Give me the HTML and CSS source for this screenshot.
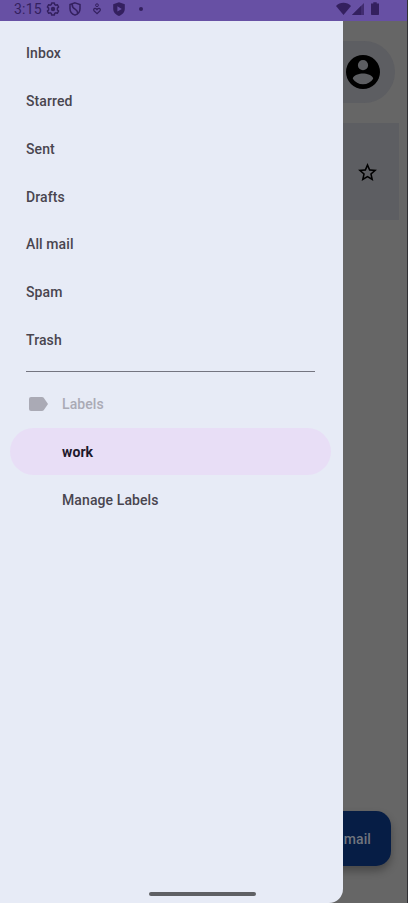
FILE: index.html
```html
<!DOCTYPE html>
<html lang="en">
<head>
<meta charset="utf-8">
<title>Mail</title>
<link rel="stylesheet" href="styles.css">
</head>
<body>
<div class="phone">
  <header class="status">
    <span class="clock">3:15</span>
    <svg class="gear" viewBox="0 0 14 14"><path d="M5.700 1h2.600l.4 1.600 1 .6 1.600-.5 1.300 2.300-1.200 1.100v1.800l1.200 1.100-1.300 2.300-1.600-.5-1 .6-.4 1.600H5.700l-.4-1.600-1-.6-1.600.5L1.400 9l1.200-1.100V6.100L1.400 5l1.300-2.300 1.600.5 1-.6z" fill="none" stroke="currentColor" stroke-width="1.500" stroke-linejoin="round"/><circle cx="7" cy="7" r="2.200" fill="currentColor"/></svg>
    <svg class="shield" viewBox="0 0 12 14"><path d="M6 .9 11 2.500v4.200C11 9.800 8.900 12.200 6 13.100 3.100 12.200 1 9.800 1 6.700V2.500zM3.200 2.200c-.2 2.600 1 3.800 2.900 4.900 1.800 1 2.500 2.100 2.600 4" fill="none" stroke="currentColor" stroke-width="1.500"/></svg>
    <svg class="care" viewBox="0 0 8 12"><circle cx="4" cy="2.200" r="1.400" fill="none" stroke="currentColor"/><path d="M4 10.600 1.200 8C.2 7 .7 5.400 2 5.400c.9 0 1.500.5 2 1.200.5-.7 1.100-1.200 2-1.200 1.300 0 1.800 1.600.8 2.600z" fill="none" stroke="currentColor" stroke-width="1.200"/></svg>
    <svg class="play" viewBox="0 0 12 14"><path fill-rule="evenodd" d="M6 .2 11.800 2.200v4.500c0 3.400-2.400 6-5.800 7.200C2.600 12.700.2 10.100.2 6.700V2.200zM4.400 4.200v5.400L8.800 6.900z" fill="currentColor"/></svg>
    <i class="dot"></i>
    <svg class="radios" viewBox="0 0 44 14"><path d="M0 4C4-.2 11-.2 15 4L7.500 13z" fill="currentColor"/><path d="M28 1v12H16z" fill="currentColor" opacity=".75"/><path d="M25 4v9h-9z" fill="currentColor"/><path d="M37.300.2h3.400v1.300H43V12.200q0 .8-.8.8h-6.400q-.8 0-.8-.8V1.500h2.300z" fill="currentColor"/></svg>
  </header>
  <main class="app">
    <div class="search">
      <svg class="account" viewBox="2 2 20 20"><path d="M12 2a10 10 0 1 0 0 20 10 10 0 0 0 0-20zm0 3a3 3 0 1 1 0 6 3 3 0 0 1 0-6zm0 14.200a7.200 7.200 0 0 1-6-3.220c.03-1.990 4-3.080 6-3.080s5.970 1.090 6 3.080a7.200 7.200 0 0 1-6 3.220z"/></svg>
    </div>
    <div class="message">
      <svg class="star" viewBox="2 2 20 19"><path d="m22 9.240-7.190-.62L12 2 9.190 8.630 2 9.240l5.460 4.730L5.820 21 12 17.270 18.180 21l-1.630-7.030zM12 15.400l-3.760 2.270 1-4.280-3.320-2.880 4.380-.38L12 6.100l1.710 4.040 4.380.38-3.320 2.880 1 4.280z"/></svg>
    </div>
    <div class="compose">mail</div>
  </main>
  <nav class="drawer">
    <a class="item">Inbox</a>
    <a class="item">Starred</a>
    <a class="item">Sent</a>
    <a class="item">Drafts</a>
    <a class="item">All mail</a>
    <a class="item">Spam</a>
    <a class="item">Trash</a>
    <hr class="rule">
    <div class="item heading"><svg class="tag" viewBox="0 0 19 14"><path d="M2 0h11q1 0 1.700.8L19 7l-4.300 6.200q-.7.800-1.700.8H2q-2 0-2-2V2q0-2 2-2z" fill="currentColor"/></svg>Labels</div>
    <a class="item label selected">work</a>
    <a class="item label">Manage Labels</a>
  </nav>
  <div class="handle"></div>
</div>
</body>
</html>
```
FILE: styles.css
```css
* { box-sizing: border-box; }
body { margin: 0; font-family: Roboto, sans-serif; }
svg { display: block; flex: none; }
.phone {
  position: relative;
  width: 408px;
  height: 903px;
  overflow: hidden;
  display: flex;
  flex-direction: column;
  background: #666;
}
.phone::after {
  content: "";
  position: absolute;
  top: 0;
  right: 0;
  width: 1px;
  height: 100%;
  background: #303034;
}
.status {
  height: 21px;
  flex: none;
  display: flex;
  align-items: center;
  padding: 0 28px 3px 14px;
  background: #6750a4;
  color: #34205f;
}
.clock { width: 31.500px; font-size: 14px; line-height: 18px; letter-spacing: 0.2px; }
.gear { width: 14px; height: 14px; }
.shield { width: 12px; height: 14px; margin-left: 9.500px; }
.care { width: 8px; height: 12px; margin-left: 11.500px; }
.play { width: 12px; height: 14px; margin-left: 12px; }
.dot { width: 4px; height: 4px; border-radius: 50%; margin-left: 14px; background: currentColor; }
.radios { width: 44px; height: 14px; margin-left: auto; }
.app {
  flex: 1;
  display: flex;
  flex-direction: column;
  padding: 20px 9px 37px;
}
.search {
  height: 62px;
  margin: 0 4px 20px 0;
  padding: 0 15px 1px 0;
  border-radius: 31px;
  background: #5d5e62;
  display: flex;
  align-items: center;
  justify-content: flex-end;
}
.account { width: 34px; height: 34px; }
.message {
  height: 97px;
  padding: 0 22.500px 0 0;
  background: #5d5e62;
  display: flex;
  align-items: center;
  justify-content: flex-end;
}
.star { width: 19px; height: 18px; }
.compose {
  width: 130px;
  height: 55px;
  margin: auto 8px 0 auto;
  padding: 1px 20px 0 0;
  border-radius: 15px;
  background: #061d45;
  color: #70757e;
  box-shadow: 0 5px 9px rgba(0, 0, 0, 0.3);
  font-size: 14px;
  font-weight: 500;
  letter-spacing: 0.1px;
  line-height: 54px;
  text-align: right;
}
.drawer {
  position: absolute;
  top: 21px;
  left: 0;
  width: 343px;
  height: 882px;
  padding: 8.600px 12px 0 10px;
  border-radius: 0 0 14px 0;
  background: #e7ebf6;
}
.item {
  height: 46.750px;
  margin-bottom: 1px;
  padding: 0.600px 0 0 16px;
  display: flex;
  align-items: center;
  border-radius: 24px;
  color: #49454f;
  font-size: 14px;
  font-weight: 500;
  letter-spacing: 0.100px;
}
.rule { height: 1px; margin: 8.200px 16px 8.100px; border: 0; background: #747580; }
.heading { padding: 1.400px 0 0 19px; color: #aaaab5; }
.tag { width: 19px; height: 14px; margin: 0 14px 1px 0; }
.label { padding: 1.200px 0 0 52px; }
.selected { background: #e8def6; color: #1d192b; font-weight: 700; }
.handle {
  position: absolute;
  left: 149px;
  top: 892px;
  width: 107px;
  height: 4px;
  border-radius: 2px;
  background: #5f6064;
}
```
